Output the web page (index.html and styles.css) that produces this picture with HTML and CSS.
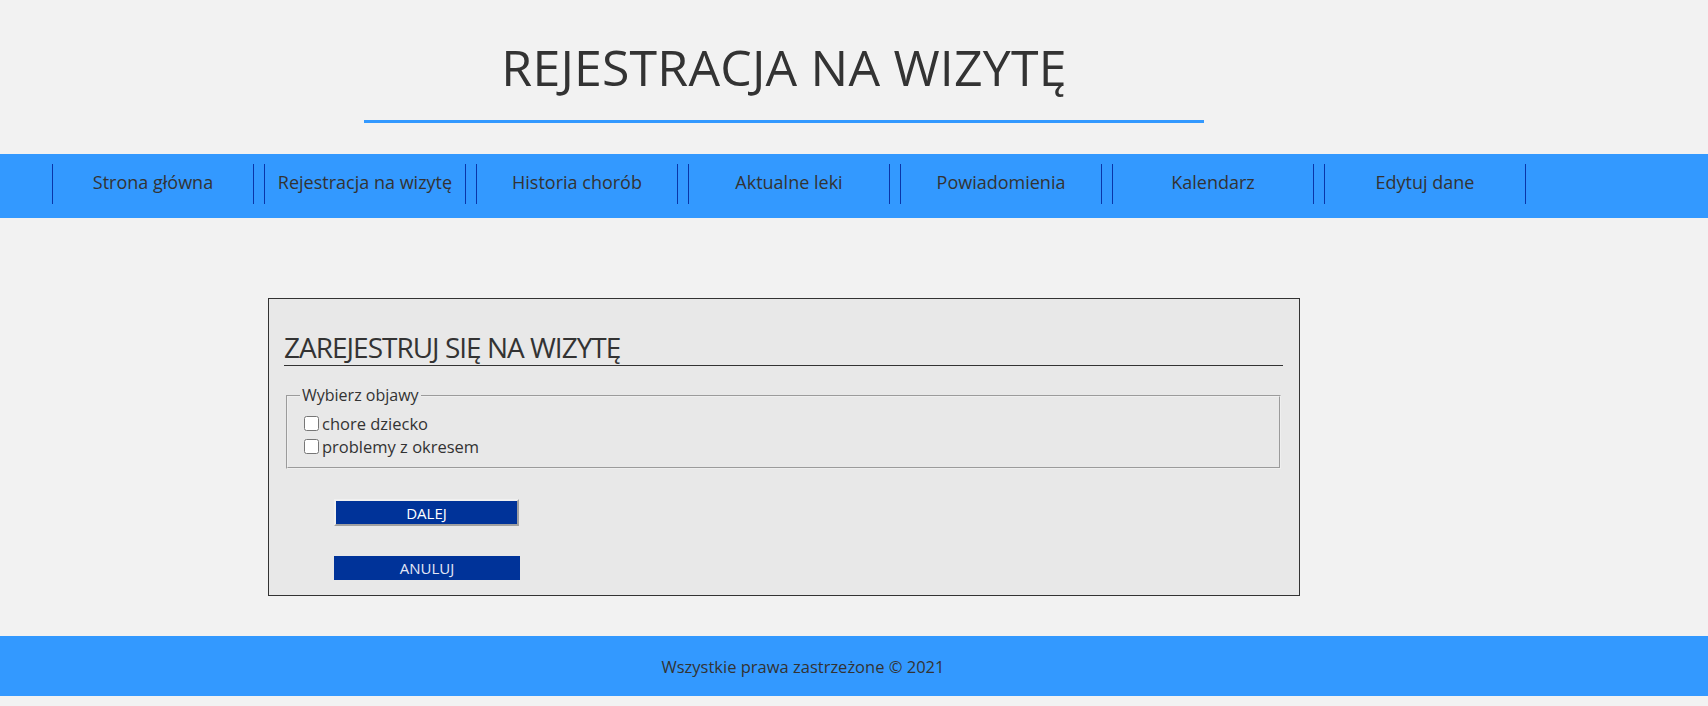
FILE: index.html
```html
<!DOCTYPE html>
<html lang="pl">
<head>
<meta charset="utf-8">
<title>Rejestracja na wizytę</title>
<link rel="stylesheet" href="styles.css">
</head>
<body>
<header class="site-header">
  <h1 class="site-title">REJESTRACJA NA WIZYTĘ</h1>
  <div class="title-rule"></div>
</header>
<nav class="main-nav">
  <a class="nav-item" href="#">Strona główna</a>
  <a class="nav-item" href="#">Rejestracja na wizytę</a>
  <a class="nav-item" href="#">Historia chorób</a>
  <a class="nav-item" href="#">Aktualne leki</a>
  <a class="nav-item" href="#">Powiadomienia</a>
  <a class="nav-item" href="#">Kalendarz</a>
  <a class="nav-item" href="#">Edytuj dane</a>
</nav>
<main class="content">
  <section class="form-box">
    <h2 class="form-title">ZAREJESTRUJ SIĘ NA WIZYTĘ</h2>
    <form class="visit-form">
      <fieldset class="symptoms">
        <legend class="symptoms-legend">Wybierz objawy</legend>
        <label class="symptom"><input type="checkbox" class="symptom-check">chore dziecko</label>
        <label class="symptom"><input type="checkbox" class="symptom-check">problemy z okresem</label>
      </fieldset>
      <input type="submit" class="btn btn-next" value="DALEJ">
      <button type="button" class="btn btn-cancel">ANULUJ</button>
    </form>
  </section>
</main>
<footer class="site-footer">
  <p class="footer-text">Wszystkie prawa zastrzeżone © 2021</p>
</footer>
</body>
</html>
```

FILE: styles.css
```css
html, body {
  margin: 0;
  padding: 0;
}
body {
  background: #f2f2f2;
  color: #333333;
  font-family: "Open Sans", "Liberation Sans", sans-serif;
}

.site-header {
  padding: 34px 140px 0 0;
  display: flex;
  flex-direction: column;
  align-items: center;
}
.site-title {
  margin: 0;
  font-size: 50px;
  font-weight: 400;
  line-height: 66px;
  letter-spacing: 0.2px;
  color: #333333;
}
.title-rule {
  width: 840px;
  height: 3px;
  margin-top: 20px;
  background: #3399ff;
}

.main-nav {
  margin-top: 31px;
  height: 64px;
  box-sizing: border-box;
  padding: 10px 0 10px 52px;
  background: #3399ff;
  display: flex;
  gap: 10px;
}
.nav-item {
  width: 202px;
  height: 40px;
  box-sizing: border-box;
  padding-bottom: 4px;
  border-left: 1px solid #0a35a8;
  border-right: 1px solid #0a35a8;
  display: flex;
  align-items: center;
  justify-content: center;
  color: #333333;
  text-decoration: none;
  font-size: 18px;
}

.content {
  padding: 80px 140px 40px 0;
  display: flex;
  justify-content: center;
}
.form-box {
  width: 999px;
  border: 1px solid #333333;
  background: #e8e8e8;
  padding: 31px 16px 15px 15px;
}
.form-title {
  margin: 0;
  font-size: 28px;
  font-weight: 400;
  line-height: 35px;
  letter-spacing: -1px;
  border-bottom: 1px solid #333333;
  color: #333333;
}
.visit-form {
  display: flex;
  flex-direction: column;
  align-items: flex-start;
}
.symptoms {
  align-self: stretch;
  margin: 18px 2px 0;
  padding: 5px 12px 9px;
  font-size: 16px;
  line-height: 23px;
}
.symptoms-legend {
  padding: 0 2px;
  line-height: 23px;
}
.symptom {
  display: flex;
  align-items: center;
  height: 23px;
  font-size: 16.5px;
}
.symptom-check {
  margin: 0 3px 0 4px;
  width: 15px;
  height: 15px;
}
.btn {
  margin-left: 50px;
  font-family: "Open Sans", "Liberation Sans", sans-serif;
  background: #003399;
  padding: 0;
  cursor: pointer;
}
.btn-next {
  margin-top: 30px;
  width: 185px;
  height: 27px;
  border: 2px solid;
  border-color: #f0f0f0 #a0a0a0 #a0a0a0 #f0f0f0;
  color: #ffffff;
  font-size: 15px;
}
.btn-cancel {
  margin-top: 30px;
  width: 186px;
  height: 24px;
  border: 0;
  color: #e4e8f6;
  font-size: 15px;
}

.site-footer {
  height: 60px;
  background: #3399ff;
  display: flex;
  align-items: center;
  justify-content: center;
  padding-right: 102px;
}
.footer-text {
  margin: 0;
  font-size: 16.5px;
  color: #333333;
}
```
